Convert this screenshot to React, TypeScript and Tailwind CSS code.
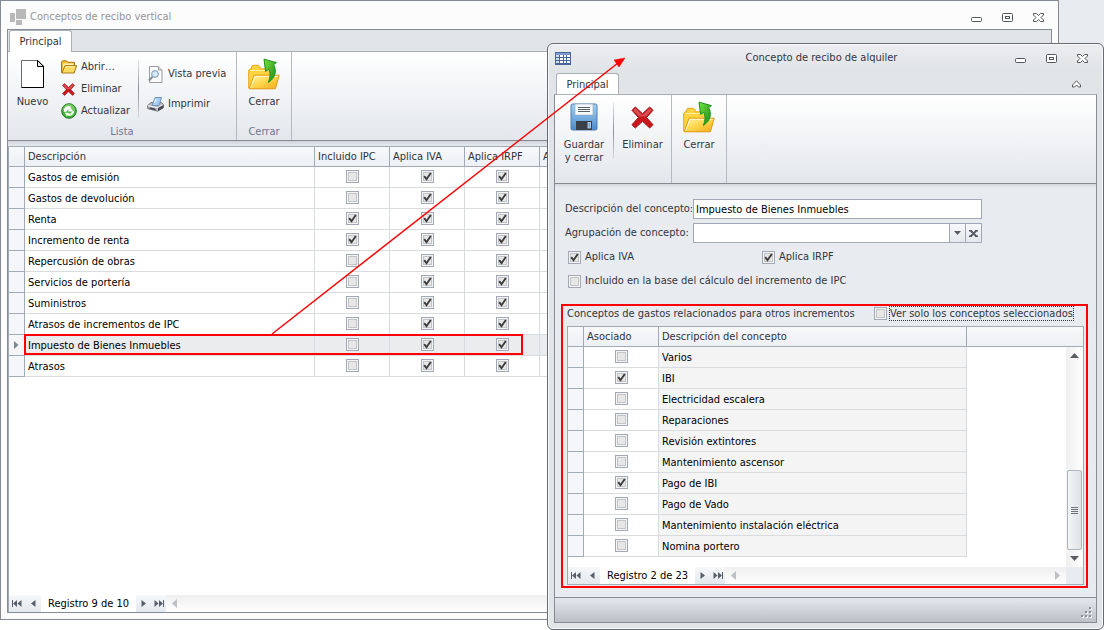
import React from "react";

const conceptos = [
  { nombre: "Gastos de emisión", ipc: false },
  { nombre: "Gastos de devolución", ipc: false },
  { nombre: "Renta", ipc: true },
  { nombre: "Incremento de renta", ipc: true },
  { nombre: "Repercusión de obras", ipc: false },
  { nombre: "Servicios de portería", ipc: false },
  { nombre: "Suministros", ipc: false },
  { nombre: "Atrasos de incrementos de IPC", ipc: false },
  { nombre: "Impuesto de Bienes Inmuebles", ipc: false, actual: true },
  { nombre: "Atrasos", ipc: false },
];

const gastos = [
  { nombre: "Varios", asociado: false },
  { nombre: "IBI", asociado: true },
  { nombre: "Electricidad escalera", asociado: false },
  { nombre: "Reparaciones", asociado: false },
  { nombre: "Revisión extintores", asociado: false },
  { nombre: "Mantenimiento ascensor", asociado: false },
  { nombre: "Pago de IBI", asociado: true },
  { nombre: "Pago de Vado", asociado: false },
  { nombre: "Mantenimiento instalación eléctrica", asociado: false },
  { nombre: "Nomina portero", asociado: false },
];

/* ---------- Icons ---------- */

function AppIcon() {
  return (
    <svg width="16" height="16" viewBox="0 0 16 16" fill="#b9b9b9" aria-hidden="true">
      <rect x="0" y="4" width="5" height="9" />
      <rect x="6" y="0" width="10" height="10" />
      <rect x="6" y="11" width="6" height="5" />
    </svg>
  );
}

function TableIcon() {
  return (
    <svg width="16" height="13" viewBox="0 0 16 13" aria-hidden="true">
      <rect width="16" height="13" fill="#4a659c" />
      <rect x="1" y="1" width="14" height="2" fill="#7f9bd0" />
      {[3, 6, 9].map((y) =>
        [1, 5, 9, 12].map((x) => (
          <rect key={`${x}-${y}`} x={x} y={y} width={x === 9 ? 2 : 3} height="2" fill={x === 1 ? "#cfdcf3" : "#fff"} />
        )),
      )}
    </svg>
  );
}

function NewPageIcon() {
  return (
    <svg width="23" height="28" viewBox="0 0 23 28" aria-hidden="true">
      <path d="M.5 .5H17L22.5 6V27.5H.5Z" fill="#fff" stroke="#6a6a6a" />
      <path d="M22.5 6V27.5H.5" fill="none" stroke="#000" />
      <path d="M16.5 .5V6.5H22.5Z" fill="#e8e8e8" stroke="#000" />
    </svg>
  );
}

function FolderOpenIcon() {
  return (
    <svg width="16" height="14" viewBox="0 0 16 14" aria-hidden="true">
      <path d="M.5 12.5V2L1.5 .8H5.5L6.8 2.3H13.5V12.5Z" fill="#f0bf3a" stroke="#a87614" />
      <path d="M2 3.5H12.5V5H4L2 9Z" fill="#fdf0ae" />
      <path d="M.8 13 4 5.7H15.6L13.2 13Z" fill="#fbdc62" stroke="#a87614" />
      <path d="M4.6 6.8H14" stroke="#fff3b4" />
    </svg>
  );
}

function RedCross({ size }: { size: number }) {
  return (
    <svg width={size} height={size} viewBox="0 0 24 24" aria-hidden="true">
      <path
        d="M4.5 1 12 8 19.5 1 23 4.5 16.2 12 23 19.5 19.5 23 12 16 4.5 23 1 19.5 7.8 12 1 4.5Z"
        fill="#c9171c"
        stroke="#9c1216"
        strokeLinejoin="round"
      />
      <path d="M4.5 2.4 12 9.6 19.5 2.4 21.6 4.5 15.5 11H8.5L2.4 4.5Z" fill="#e0676a" opacity=".7" />
    </svg>
  );
}

function RefreshIcon() {
  return (
    <svg width="16" height="16" viewBox="0 0 16 16" aria-hidden="true">
      <circle cx="8" cy="8" r="7.3" fill="#3fae35" stroke="#277a2a" />
      <path d="M2 7A6 6 0 0 1 14 7Q8 9.500 2 7Z" fill="#9be07d" opacity=".6" />
      <path d="M2.6 8.6A5.2 5.2 0 0 1 9.6 3.4L10 5.800 12.400 8.600H6.800L8 6.600A2.400 2.400 0 0 0 5.400 9.400Z" fill="#fff" />
      <path d="M13.4 7.4A5.2 5.2 0 0 1 6.4 12.600L6 13.400 3.600 9.800H8.600L7.800 10.800A2.600 2.600 0 0 0 10.600 8.600Z" fill="#e9fbe2" />
    </svg>
  );
}

function PreviewIcon() {
  return (
    <svg width="15" height="17" viewBox="0 0 15 17" aria-hidden="true">
      <path d="M1.5 .5H10.5L14 4V16.5H1.5Z" fill="#fbfbfb" stroke="#9b9b9b" />
      <path d="M10.5 .5V4H14" fill="#e2e2e2" stroke="#9b9b9b" />
      <path d="M4.6 10.6 1 14.5" stroke="#7f8894" strokeWidth="2" />
      <circle cx="7" cy="8" r="3.4" fill="#d5e8fa" stroke="#7896b8" />
    </svg>
  );
}

function PrinterIcon() {
  return (
    <svg width="17" height="15" viewBox="0 0 17 15" aria-hidden="true">
      <path d="M.6 8.5 4 5.6H14.4L16.4 7.4V10.8L10.6 14.2.6 11.6Z" fill="#b9bcc1" stroke="#74787f" />
      <path d="M5 8.600 8 .6H14.5L12 8.600Z" fill="#a3cdf4" stroke="#7191b5" />
      <path d="M7.500 6 9.200 1.800" stroke="#e3f1fd" strokeWidth="1.500" />
      <path d="M.9 8.600 10.6 10.800 16 7.800" fill="none" stroke="#f2f4f5" />
      <path d="M2.600 11 8.500 12.500" stroke="#3f434a" strokeWidth="1.600" />
      <path d="M11 11V14L16.400 10.800V8Z" fill="#43474e" />
    </svg>
  );
}

function FolderCloseIcon() {
  return (
    <svg width="32" height="32" viewBox="0 0 32 32" aria-hidden="true">
      <defs>
        <linearGradient id="folderFront" x1="0" y1="0" x2="1" y2="1">
          <stop offset="0" stopColor="#fff6ae" />
          <stop offset=".5" stopColor="#fed54a" />
          <stop offset="1" stopColor="#f7a81b" />
        </linearGradient>
        <linearGradient id="greenArrow" x1="0" y1="0" x2="1" y2="1">
          <stop offset="0" stopColor="#7ae03c" />
          <stop offset="1" stopColor="#128a1a" />
        </linearGradient>
      </defs>
      <path d="M.7 30V12L2 10.8H3.600V8.500L5 7.300H10.500L12 8.800V10.800H22.500V30Z" fill="#fdd340" stroke="#e8a51e" />
      <path d="M2 12.500H21" stroke="#fff2a8" />
      <path d="M1.200 30.800 6 17.200H31.200L27.400 30.800Z" fill="url(#folderFront)" stroke="#e39a16" />
      <path d="M2.800 29.500 7 18.400H29.600" fill="none" stroke="#fff8c8" />
      <path
        d="M16 1.200 28.400 4.600 25.600 6.800C29 12.500 27.500 20 20.400 24.400 22.500 19 22.600 14.500 20.800 11.400L17.600 13.400Z"
        fill="url(#greenArrow)"
        stroke="#1a8f1c"
        strokeLinejoin="round"
      />
    </svg>
  );
}

function SaveIcon() {
  return (
    <svg width="28" height="28" viewBox="0 0 28 28" aria-hidden="true">
      <defs>
        <linearGradient id="disk" x1="0" y1="0" x2="0" y2="1">
          <stop offset="0" stopColor="#a5d2f2" />
          <stop offset="1" stopColor="#4a8ccc" />
        </linearGradient>
      </defs>
      <rect x="1" y="1" width="26" height="26" rx="1.5" fill="url(#disk)" stroke="#4f7fb3" />
      <rect x="5" y="1" width="18" height="11" fill="#f7fafc" stroke="#8fa9c0" strokeWidth=".6" />
      <path d="M8 4.500H20M8 6.500H20M8 8.500H20" stroke="#5a5f64" />
      <rect x="6" y="18" width="16" height="9" fill="#3a4048" />
      <rect x="18" y="19.500" width="2.500" height="5.500" fill="#6fa8de" stroke="#dcebf7" strokeWidth=".7" />
    </svg>
  );
}

function CheckMark() {
  return (
    <svg
      viewBox="0 0 13 13"
      className="pointer-events-none col-start-1 row-start-1 hidden size-[13px] peer-checked:block"
      aria-hidden="true"
    >
      <path d="M3.2 6.2 5.5 9.2 9.8 3" fill="none" stroke="#3c3c3e" strokeWidth="1.9" />
    </svg>
  );
}

function WindowButtons() {
  return (
    <div className="flex items-center gap-5">
      <button type="button" aria-label="Minimizar" className="flex h-4 w-[11px] items-end pb-[3px]">
        <svg width="11" height="5" viewBox="0 0 11 5">
          <rect x=".5" y=".5" width="10" height="4" rx="1" fill="#fff" stroke="#53575f" />
        </svg>
      </button>
      <button type="button" aria-label="Maximizar" className="flex h-4 w-[11px] items-center">
        <svg width="11" height="9" viewBox="0 0 11 9">
          <rect x=".5" y=".5" width="10" height="8" rx="1" fill="#fff" stroke="#53575f" />
          <rect x="3.5" y="3.5" width="4" height="2" fill="#fff" stroke="#53575f" />
        </svg>
      </button>
      <button type="button" aria-label="Cerrar ventana" className="flex h-4 w-[11px] items-center">
        <svg width="11" height="9" viewBox="0 0 11 9">
          <path
            d="M.5 .5H3.5L5.500 2.500 7.500 .5H10.500V2L8 4.500 10.500 7V8.500H7.500L5.500 6.500 3.500 8.500H.5V7L3 4.500 .5 2Z"
            fill="#fff"
            stroke="#53575f"
          />
        </svg>
      </button>
    </div>
  );
}

/* ---------- Controls ---------- */

function Check({ checked = false, id, label }: { checked?: boolean; id?: string; label?: string }) {
  return (
    <span className="grid size-[13px] shrink-0">
      <input
        type="checkbox"
        id={id}
        aria-label={label}
        defaultChecked={checked}
        className="peer col-start-1 row-start-1 size-[13px] appearance-none border border-[#a2a9b5] bg-[#e7e7e8] shadow-[inset_0_0_0_1px_#f3f4f5,inset_0_0_0_2px_#c3c4c6]"
      />
      <CheckMark />
    </span>
  );
}

function Tab() {
  return (
    <div role="tablist" className="flex">
      <button
        type="button"
        role="tab"
        aria-selected="true"
        className="-mb-px h-[22px] w-[63px] rounded-t-[3px] border border-b-0 border-[#a9afb7] bg-white text-[#33353d]"
      >
        Principal
      </button>
    </div>
  );
}

function BigButton({ icon, children, className = "" }: { icon: React.ReactNode; children: React.ReactNode; className?: string }) {
  return (
    <button type="button" className={`flex flex-col items-center leading-[13px] ${className}`}>
      <span className="flex h-9 items-center">{icon}</span>
      {children}
    </button>
  );
}

function SmallButton({ icon, children }: { icon: React.ReactNode; children: React.ReactNode }) {
  return (
    <button type="button" className="flex h-[22px] items-center gap-1 text-left">
      <span className="flex w-[17px] justify-center">{icon}</span>
      {children}
    </button>
  );
}

function Divider({ className }: { className: string }) {
  return <div className={`w-px bg-linear-to-b from-[#e3e5e8] via-[#8e939a] to-[#d5d9de] ${className}`} />;
}

function NavButton({ label, children }: { label: string; children: React.ReactNode }) {
  return (
    <button type="button" aria-label={label} className="flex h-full w-4 items-center justify-center">
      {children}
    </button>
  );
}

function Navigator({ text }: { text: string }) {
  return (
    <div className="flex h-[17px]">
      <div className="flex w-8 bg-linear-to-b from-[#f6f8fa] to-[#e4e9ee]">
        <NavButton label="Primero">
          <svg width="10" height="7" viewBox="0 0 10 7" fill="#58606b">
            <path d="M0 0H1V7H0ZM1 3.5 5 0V7ZM5.5 3.5 9.5 0V7Z" />
          </svg>
        </NavButton>
        <NavButton label="Anterior">
          <svg width="5" height="7" viewBox="0 0 5 7" fill="#58606b">
            <path d="M0 3.5 4.5 0V7Z" />
          </svg>
        </NavButton>
      </div>
      <output className="w-[95px] pl-[7px] leading-[17px] whitespace-nowrap text-black">{text}</output>
      <div className="flex w-[30px] bg-linear-to-b from-[#f6f8fa] to-[#e4e9ee]">
        <NavButton label="Siguiente">
          <svg width="5" height="7" viewBox="0 0 5 7" fill="#58606b">
            <path d="M.5 0 5 3.5 .5 7Z" />
          </svg>
        </NavButton>
        <NavButton label="Último">
          <svg width="10" height="7" viewBox="0 0 10 7" fill="#58606b">
            <path d="M.5 0 4.5 3.5 .5 7ZM5 0 9 3.5 5 7ZM9 0H10V7H9Z" />
          </svg>
        </NavButton>
      </div>
      <div className="flex flex-1 items-center justify-between bg-linear-to-b from-[#efefef] to-white px-1.5">
        <svg width="5" height="9" viewBox="0 0 5 9" fill="#bcbfc3">
          <path d="M0 4.5 5 0V9Z" />
        </svg>
        <svg width="5" height="9" viewBox="0 0 5 9" fill="#bcbfc3">
          <path d="M0 0 5 4.5 0 9Z" />
        </svg>
      </div>
    </div>
  );
}

const headCell =
  "border-b border-r border-[#a2aab6] bg-linear-to-b from-[#f7f9fb] to-[#edf0f4] p-0 pl-[3px] text-left font-normal text-[#2f323a]";
const indicator = "border-b border-r border-[#a2aab6] bg-[#f4f6f9] p-0";
const textCell = "border-b border-r border-[#d9dcdf] p-0 pt-0.5 pl-[3px] text-black";
const checkCell = "border-b border-r border-[#d9dcdf] p-0 pb-px";

function CheckCell({ checked, label }: { checked: boolean; label: string }) {
  return (
    <td className={checkCell}>
      <div className="flex justify-center">
        <Check checked={checked} label={label} />
      </div>
    </td>
  );
}

/* ---------- Windows ---------- */

function ListWindow() {
  return (
    <section className="flex min-w-0 flex-1 flex-col border border-[#868a92] bg-[#fcfcfc] px-1.5 pb-1.5">
      <header className="flex h-7 items-center justify-between pr-2 pl-[3px]">
        <div className="flex items-center gap-1 pt-1">
          <AppIcon />
          <h1 className="text-[#969696]">Conceptos de recibo vertical</h1>
        </div>
        <div className="pt-1">
          <WindowButtons />
        </div>
      </header>
      <div className="flex flex-1 flex-col border border-[#868c96] bg-white">
        <div className="flex h-[22px] items-end border-b border-[#a9afb7] bg-[#e1e5e8] pl-px">
          <Tab />
        </div>
        <div className="flex h-[89px] border-b border-[#858a93] bg-linear-to-b from-white to-[#e3e7ec] text-[#33353d]">
          <div className="flex w-[229px] flex-col justify-between border-r border-[#b4bac2]">
            <div className="flex">
              <BigButton icon={<NewPageIcon />} className="mt-1 h-14 w-[49px] gap-[3px]">
                Nuevo
              </BigButton>
              <div className="mt-1 flex w-[81px] flex-col pl-[3px]">
                <SmallButton icon={<FolderOpenIcon />}>Abrir…</SmallButton>
                <SmallButton icon={<RedCross size={13} />}>Eliminar</SmallButton>
                <SmallButton icon={<RefreshIcon />}>Actualizar</SmallButton>
              </div>
              <Divider className="mt-2 h-[58px]" />
              <div className="mt-[11px] flex flex-col gap-2 pl-2">
                <SmallButton icon={<PreviewIcon />}>Vista previa</SmallButton>
                <SmallButton icon={<PrinterIcon />}>Imprimir</SmallButton>
              </div>
            </div>
            <p className="h-4 text-center leading-[15px] text-[#6d7590]">Lista</p>
          </div>
          <div className="flex w-[55px] flex-col justify-between border-r border-[#b4bac2]">
            <BigButton icon={<FolderCloseIcon />} className="mt-1 gap-[3px]">
              Cerrar
            </BigButton>
            <p className="h-4 text-center leading-[15px] text-[#6d7590]">Cerrar</p>
          </div>
        </div>
        <div className="h-[5px] bg-linear-to-b from-[#cfd4da] to-[#e8ebf0]" />
        <div className="flex flex-1 flex-col border-t border-l border-[#a2aab6] bg-white">
          <table className="w-full table-fixed border-separate border-spacing-0">
            <colgroup>
              <col className="w-4" />
              <col className="w-[290px]" />
              <col className="w-[75px]" />
              <col className="w-[75px]" />
              <col className="w-[75px]" />
              <col />
            </colgroup>
            <thead>
              <tr className="h-5">
                <th className={headCell} aria-label="Fila" />
                <th className={headCell}>Descripción</th>
                <th className={headCell}>Incluido IPC</th>
                <th className={headCell}>Aplica IVA</th>
                <th className={headCell}>Aplica IRPF</th>
                <th className={headCell}>A</th>
              </tr>
            </thead>
            <tbody>
              {conceptos.map((c) => (
                <tr key={c.nombre} className={c.actual ? "h-[21px] bg-[#ebecee]" : "h-[21px]"}>
                  <td className={indicator}>
                    {c.actual && (
                      <svg width="5" height="8" viewBox="0 0 5 8" className="mx-auto" fill="#7f8793">
                        <path d="M0 0 4.5 4 0 8Z" />
                      </svg>
                    )}
                  </td>
                  <td className={textCell}>{c.nombre}</td>
                  <CheckCell checked={c.ipc} label={`Incluido IPC: ${c.nombre}`} />
                  <CheckCell checked label={`Aplica IVA: ${c.nombre}`} />
                  <CheckCell checked label={`Aplica IRPF: ${c.nombre}`} />
                  <td className={textCell} />
                </tr>
              ))}
            </tbody>
          </table>
          <div className="mt-auto">
            <Navigator text="Registro 9 de 10" />
          </div>
        </div>
      </div>
    </section>
  );
}

function RelatedConcepts() {
  return (
    <section className="flex flex-1 flex-col border-2 border-[#ff0000] pt-px pr-0.5 pb-px pl-1">
      <div className="flex h-[19px] items-start">
        <h3 className="w-[307px] leading-[14px] whitespace-nowrap">Conceptos de gastos relacionados para otros incrementos</h3>
        <Check id="solo" />
        <label htmlFor="solo" className="ml-[3px] leading-[13px] whitespace-nowrap outline-1 outline-dotted outline-[#33353d]">
          Ver solo los conceptos seleccionados
        </label>
      </div>
      <div className="flex flex-1 flex-col border border-[#a2aab6] bg-white">
        <div className="flex flex-1">
          <div className="flex-1">
            <table className="w-full table-fixed border-separate border-spacing-0">
              <colgroup>
                <col className="w-4" />
                <col className="w-[75px]" />
                <col className="w-[308px]" />
                <col />
              </colgroup>
              <thead>
                <tr className="h-5">
                  <th className={headCell} aria-label="Fila" />
                  <th className={headCell}>Asociado</th>
                  <th className={headCell}>Descripción del concepto</th>
                  <th
                    className="border-b border-[#a2aab6] bg-linear-to-b from-[#f7f9fb] to-[#edf0f4] p-0"
                    aria-label="Sin columna"
                  />
                </tr>
              </thead>
              <tbody>
                {gastos.map((g) => (
                  <tr key={g.nombre} className="h-[21px]">
                    <td className={indicator} />
                    <CheckCell checked={g.asociado} label={`Asociado: ${g.nombre}`} />
                    <td className={`${textCell} bg-[#f4f4f4]`}>{g.nombre}</td>
                    <td className="p-0" />
                  </tr>
                ))}
              </tbody>
            </table>
          </div>
          <div className="flex w-[17px] flex-col">
            <div className="h-5 border-b border-[#a2aab6] bg-linear-to-b from-[#f7f9fb] to-[#edf0f4]" />
            <div className="flex flex-1 flex-col items-center justify-between bg-linear-to-r from-[#efefef] to-white py-1.5">
              <svg width="9" height="5" viewBox="0 0 9 5" fill="#5b5e63">
                <path d="M4.5 0 9 5H0Z" />
              </svg>
              <div className="mt-auto mb-1.5 flex h-20 w-[15px] flex-col items-center justify-center gap-px rounded-[2px] border border-[#aeb5bd] bg-linear-to-r from-[#f3f5f6] to-[#dfe3e5]">
                <span className="h-px w-[7px] bg-[#6f7378]" />
                <span className="h-px w-[7px] bg-[#6f7378]" />
                <span className="h-px w-[7px] bg-[#6f7378]" />
                <span className="h-px w-[7px] bg-[#6f7378]" />
              </div>
              <svg width="9" height="5" viewBox="0 0 9 5" fill="#5b5e63">
                <path d="M0 0H9L4.5 5Z" />
              </svg>
            </div>
          </div>
        </div>
        <div className="flex">
          <div className="flex-1">
            <Navigator text="Registro 2 de 23" />
          </div>
          <div className="w-[17px] bg-[#e8ebf0]" />
        </div>
      </div>
    </section>
  );
}

function DetailWindow() {
  return (
    <section
      role="dialog"
      aria-label="Concepto de recibo de alquiler"
      className="absolute top-[43px] right-0 bottom-0 left-[547px] flex flex-col rounded-[6px] border border-[#666b73] bg-[#e1e5e8] bg-linear-to-b from-[#ecedf1] to-[#e1e5e8] to-[24px] px-1.5 pb-1.5 shadow-[inset_0_0_0_1px_#f8f9fa]"
    >
      <header className="grid h-7 grid-cols-[1fr_auto_1fr] items-center pr-[9px] pl-px">
        <TableIcon />
        <h2 className="text-[#33353d]">Concepto de recibo de alquiler</h2>
        <div className="justify-self-end">
          <WindowButtons />
        </div>
      </header>
      <div className="flex h-[22px] items-end justify-between pl-0.5">
        <Tab />
        <button type="button" aria-label="Contraer cinta" className="mr-4 mb-1.5">
          <svg width="9" height="8" viewBox="0 0 9 8">
            <path d="M.5 5 4.5 .8 8.5 5V7H6.5L4.5 5 2.5 7H.5Z" fill="#fff" stroke="#53575f" />
          </svg>
        </button>
      </div>
      <div className="flex flex-1 flex-col border border-[#868c96] border-t-[#a9afb7] bg-[#e8ebf0] text-[#33353d]">
        <div className="flex h-[89px] border-b border-[#858a93] bg-linear-to-b from-white to-[#e3e7ec]">
          <div className="flex w-[117px] border-r border-[#b4bac2] pt-1">
            <BigButton icon={<SaveIcon />} className="h-[70px] w-[58px] gap-[3px]">
              Guardar
              <br />y cerrar
            </BigButton>
            <Divider className="mt-1 h-14" />
            <BigButton icon={<RedCross size={23} />} className="h-14 flex-1 gap-[3px]">
              Eliminar
            </BigButton>
          </div>
          <div className="flex w-[55px] justify-center border-r border-[#b4bac2] pt-1">
            <BigButton icon={<FolderCloseIcon />} className="h-14 gap-[3px]">
              Cerrar
            </BigButton>
          </div>
        </div>
        <div className="h-1 bg-linear-to-b from-[#d3d7dc] to-[#e8ebf0]" />
        <div className="flex flex-1 flex-col px-1.5 pt-[11px] pb-[9px]">
          <form className="flex flex-col gap-1 pl-1">
            <div className="flex h-5 items-center">
              <label htmlFor="descripcion" className="w-32 whitespace-nowrap">
                Descripción del concepto:
              </label>
              <input
                id="descripcion"
                defaultValue="Impuesto de Bienes Inmuebles"
                className="h-5 w-[289px] border border-[#a2a9b5] bg-white px-0.5 text-black"
              />
            </div>
            <div className="flex h-5 items-center">
              <label htmlFor="agrupacion" className="w-32 whitespace-nowrap">
                Agrupación de concepto:
              </label>
              <div className="flex h-5 w-[289px] border border-[#a2a9b5] bg-white">
                <select id="agrupacion" className="min-w-0 flex-1 appearance-none bg-white px-0.5 text-black">
                  <option value="" />
                </select>
                <button
                  type="button"
                  aria-label="Desplegar"
                  className="flex w-4 items-center justify-center border-l border-[#a2a9b5] bg-linear-to-b from-[#f7f9fb] to-[#e4e8ed]"
                >
                  <svg width="7" height="4" viewBox="0 0 7 4" fill="#565a63">
                    <path d="M0 0H7L3.5 4Z" />
                  </svg>
                </button>
                <button
                  type="button"
                  aria-label="Borrar"
                  className="flex w-4 items-center justify-center border-l border-[#a2a9b5] bg-linear-to-b from-[#f7f9fb] to-[#e4e8ed]"
                >
                  <svg width="9" height="7" viewBox="0 0 9 7" stroke="#565a63" strokeWidth="2">
                    <path d="M1 0 8 7M8 0 1 7M0 .5H3M6 .5H9M0 6.5H3M6 6.5H9" />
                  </svg>
                </button>
              </div>
            </div>
            <div className="flex h-5 items-center pl-[3px]">
              <div className="flex w-[194px] items-center gap-1">
                <Check id="iva" checked />
                <label htmlFor="iva">Aplica IVA</label>
              </div>
              <div className="flex items-center gap-1">
                <Check id="irpf" checked />
                <label htmlFor="irpf">Aplica IRPF</label>
              </div>
            </div>
            <div className="flex h-5 items-center gap-1 pl-[3px]">
              <Check id="ipc" />
              <label htmlFor="ipc">Incluido en la base del cálculo del incremento de IPC</label>
            </div>
          </form>
          <div className="flex flex-1 flex-col pt-[13px] pr-0.5">
            <RelatedConcepts />
          </div>
        </div>
        <footer className="flex h-[25px] items-end justify-end border-t border-[#868c96] bg-linear-to-b from-[#e4e7ec] to-[#bcc0c7] p-1">
          <svg width="11" height="11" viewBox="0 0 11 11" aria-hidden="true">
            {[
              [8, 0],
              [4, 4],
              [8, 4],
              [0, 8],
              [4, 8],
              [8, 8],
            ].map(([x, y]) => (
              <g key={`${x}-${y}`}>
                <rect x={x + 1} y={y + 1} width="2" height="2" fill="#f2f3f5" />
                <rect x={x} y={y} width="2" height="2" fill="#8d9199" />
              </g>
            ))}
          </svg>
        </footer>
      </div>
    </section>
  );
}

/* Red callouts drawn over both windows */
function Callouts() {
  return (
    <svg
      className="pointer-events-none absolute top-0 left-0"
      width="640"
      height="360"
      viewBox="0 0 640 360"
      fill="none"
      stroke="#ff0000"
      aria-hidden="true"
    >
      <rect x="25" y="335" width="497" height="19" strokeWidth="2" />
      <path d="M272 334 618 63" strokeWidth="1.5" />
      <path d="M625 58 619 67 614 60Z" fill="#ff0000" strokeWidth=".5" />
    </svg>
  );
}

export default function App() {
  return (
    <main className="relative flex min-h-screen bg-white font-['DejaVu_Sans_Condensed','Noto_Sans',sans-serif] text-[11px] leading-[14px]">
      <div className="flex flex-1 pb-2.5">
        <ListWindow />
      </div>
      <div className="mb-2.5 w-[45px] bg-[#e8ebf0]" />
      <DetailWindow />
      <Callouts />
    </main>
  );
}
